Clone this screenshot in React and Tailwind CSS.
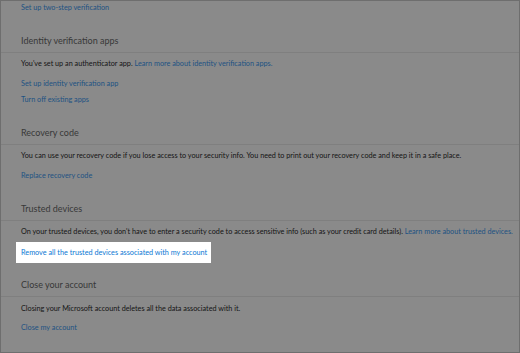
import React from 'react';

const font = { fontFamily: 'Lato, "Noto Sans", sans-serif' };

const Link = ({ children, className = '' }) => (
  <div className={`h-[16px] pt-[1px] leading-[15px] text-[7.25px] text-[#1d5283] whitespace-nowrap ${className}`}>{children}</div>
);

const Text = ({ children, className = '' }) => (
  <div className={`h-[16px] pt-[1px] leading-[15px] text-[7.25px] text-[#141414] whitespace-nowrap ${className}`}>{children}</div>
);

const Heading = ({ children, className = '' }) => (
  <div className={`h-[23px] border-b border-[#7f7f7f] ${className}`}>
    <div className="pl-[20px] pt-[1px] leading-[20px] text-[9px] text-[#383838]">{children}</div>
  </div>
);

export default function App() {
  return (
    <div style={font} className="w-[520px] h-[353px] bg-[#8a8a8a] border border-[#6e6e6e] overflow-hidden">
      <div className="pl-[20px]">
        <Link className="mt-[-2px]">Set up two-step verification</Link>
      </div>

      {/* Identity verification apps */}
      <Heading className="mt-[15px]">Identity verification apps</Heading>
      <div className="pl-[20px]">
        <Text className="mt-[2px]">
          You've set up an authenticator app.{' '}
          <span className="text-[#1d5283]">Learn more about identity verification apps.</span>
        </Text>
        <Link className="mt-[4px]">Set up identity verification app</Link>
        <Link>Turn off existing apps</Link>
      </div>

      {/* Recovery code */}
      <Heading className="mt-[15px]">Recovery code</Heading>
      <div className="pl-[20px]">
        <Text className="mt-[2px]">
          You can use your recovery code if you lose access to your security info. You need to print out your recovery code and keep it in a safe place.
        </Text>
        <Link className="mt-[4px]">Replace recovery code</Link>
      </div>

      {/* Trusted devices */}
      <Heading className="mt-[15px]">Trusted devices</Heading>
      <div className="pl-[20px]">
        <Text className="mt-[2px]">
          On your trusted devices, you don't have to enter a security code to access sensitive info (such as your credit card details).{' '}
          <span className="text-[#1d5283]">Learn more about trusted devices.</span>
        </Text>
        <div className="mt-[3px] ml-[-5px] w-[195px] h-[21px] bg-white pl-[5px] flex items-center">
          <span className="text-[7.25px] text-[#0a78d4] leading-[16px] whitespace-nowrap">Remove all the trusted devices associated with my account</span>
        </div>
      </div>

      {/* Close your account */}
      <Heading className="mt-[11px]">Close your account</Heading>
      <div className="pl-[20px]">
        <Text className="mt-[3px]">Closing your Microsoft account deletes all the data associated with it.</Text>
        <Link className="mt-[3px]">Close my account</Link>
      </div>
    </div>
  );
}
